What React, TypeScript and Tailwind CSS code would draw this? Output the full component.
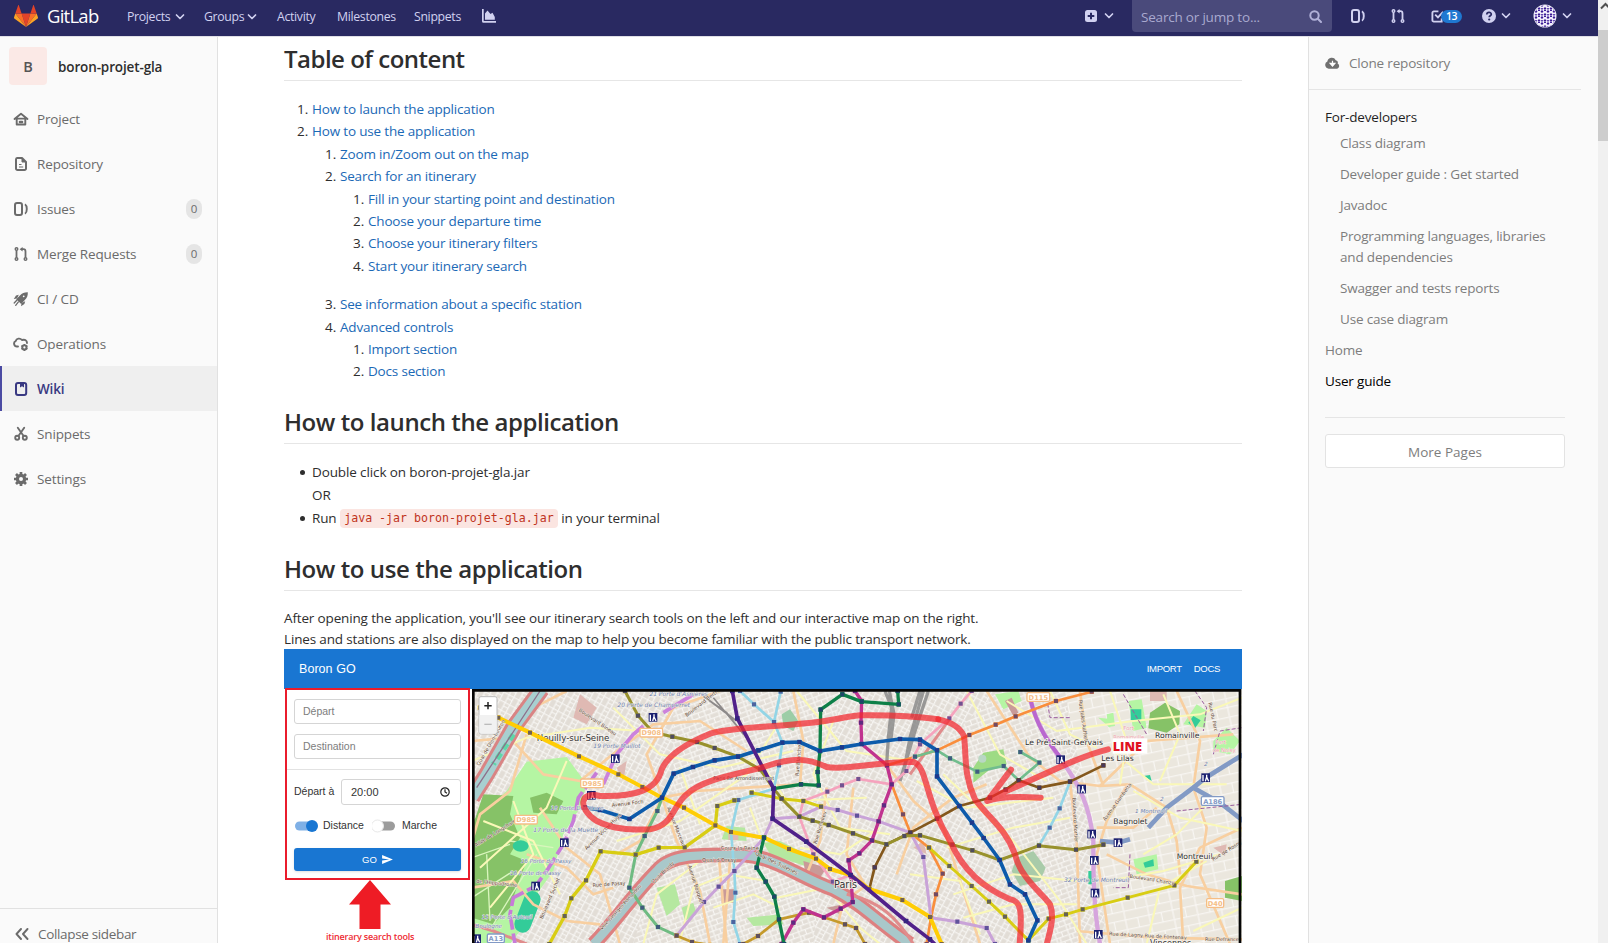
import React from "react";

const CHEVRON = "M1.5 2 5 5.5 8.5 2";

function Chevron({ className = "" }: { className?: string }) {
  return (
    <svg viewBox="0 0 10 8" className={"h-2 w-[10px] shrink-0 " + className} fill="none" stroke="currentColor" strokeWidth="1.7" strokeLinecap="round" strokeLinejoin="round">
      <path d={CHEVRON} />
    </svg>
  );
}

function IssuesIcon() {
  return (
    <svg viewBox="0 0 16 16" className="size-4 shrink-0" fill="none" stroke="currentColor" strokeWidth="2">
      <rect x="2" y="2" width="7" height="12" rx="2" />
      <path d="M12 3.200c1.500 1 1.800 2 1.800 4.800s-.3 3.800-1.800 4.800" strokeWidth="1.900" />
    </svg>
  );
}

function MergeIcon() {
  return (
    <svg viewBox="0 0 16 16" className="size-4 shrink-0" fill="none" stroke="currentColor" strokeWidth="1.800">
      <circle cx="3.500" cy="3" r="1.300" strokeWidth="1.400" />
      <circle cx="3.500" cy="13" r="1.300" strokeWidth="1.400" />
      <circle cx="12.500" cy="13" r="1.300" strokeWidth="1.400" />
      <path d="M3.500 4.500v7M12.500 11.500V5.500c0-1.500-.7-2.300-2-2.300H8.500" />
      <path d="M9.600.9v4.600L6.600 3.200z" fill="currentColor" stroke="none" />
    </svg>
  );
}

function NavIcon({ name }: { name: string }) {
  const c = "size-4 shrink-0";
  switch (name) {
    case "Project":
      return (
        <svg viewBox="0 0 16 16" className={c} fill="none" stroke="currentColor" strokeWidth="1.900" strokeLinejoin="round" strokeLinecap="round">
          <path d="M1.500 8 8 2.700 14.500 8M3.700 8v5.500h8.600V8M2.500 7.600h11" />
          <path d="M7 11h2" strokeWidth="2.600" />
        </svg>
      );
    case "Repository":
      return (
        <svg viewBox="0 0 16 16" className={c} fill="none" stroke="currentColor" strokeWidth="2" strokeLinejoin="round">
          <path d="M4 2h5l4 4v6.500a1.500 1.500 0 0 1-1.500 1.500h-7A1.500 1.500 0 0 1 3 12.500v-9C3 2.500 3.500 2 4 2z" />
          <path d="M9 2v4h4z" fill="currentColor" strokeWidth="1" />
          <path d="M6 8.500h2.500M6 11h4.200" strokeWidth="1.200" />
        </svg>
      );
    case "Issues":
      return <IssuesIcon />;
    case "Merge Requests":
      return <MergeIcon />;
    case "CI / CD":
      return (
        <svg viewBox="0 0 16 16" className={c} fill="currentColor">
          <path fillRule="evenodd" d="M14.800 1.200c.2 3.300-.8 5.700-3.200 8.100L8.200 13 3.200 8.200 6.900 4.500C9.100 2.200 11.500 1.100 14.800 1.200zM10.700 4.400a.9.9 0 1 0 .9.900.9.900 0 0 0-.9-.9z" />
          <path d="M5.800 3.800 3 4.600.8 8l3.200-.6zM12.200 10.200 11.400 13 8 15.200l.6-3.200z" />
          <path d="M3.800 9.300 1.200 12M5.400 10.900 2.700 14.300" stroke="currentColor" strokeWidth="1.300" strokeLinecap="round" />
        </svg>
      );
    case "Operations":
      return (
        <svg viewBox="0 0 16 16" className={c} fill="none" stroke="currentColor" strokeWidth="1.900" strokeLinecap="round">
          <path d="M5 10.500H4A2.900 2.900 0 0 1 2.700 5C3.500 2.400 7 1.700 9 4c3-1 5 .5 5 3" />
          <circle cx="11.400" cy="11.400" r="2.100" strokeWidth="2" />
          <path d="M11.400 7.900v1.200M11.400 13.700v1.200M8.400 9.700l1 .6M13.400 12.500l1 .6M8.400 13.100l1-.6M13.400 10.300l1-.6" strokeWidth="1.500" strokeLinecap="butt" />
        </svg>
      );
    case "Wiki":
      return (
        <svg viewBox="0 0 16 16" className={c} fill="none" stroke="currentColor" strokeWidth="2">
          <rect x="3" y="2" width="10.200" height="12" rx="2" />
          <path d="M7 2.500h4v4L9 5.200 7 6.500z" fill="currentColor" stroke="none" />
        </svg>
      );
    case "Snippets":
      return (
        <svg viewBox="0 0 16 16" className={c} fill="none" stroke="currentColor" strokeWidth="1.900">
          <circle cx="4.200" cy="11.800" r="2" />
          <circle cx="11.800" cy="11.800" r="2" />
          <path d="M4.800 1.800 10.600 10M11.200 1.800 5.400 10" strokeLinecap="round" />
        </svg>
      );
    default:
      return (
        <svg viewBox="0 0 16 16" className={c} fill="none" stroke="currentColor">
          <circle cx="8" cy="8" r="3.600" strokeWidth="3.200" />
          <path d="M8 1v3M8 12v3M1 8h3M12 8h3M3 3l2.200 2.200M10.800 10.800 13 13M13 3l-2.200 2.200M5.200 10.800 3 13" strokeWidth="2.700" />
        </svg>
      );
  }
}

function Header() {
  return (
    <header className="flex h-[37px] shrink-0 border-b border-[#dfdfe6] bg-[#292961] pb-1 text-[12.300px] text-[#d1d1f0]">
      <div className="flex w-[127px] shrink-0 items-center pl-[14px]">
        <svg viewBox="0 0 24 22" className="h-[22px] w-6">
          <path fill="#e24329" d="M12 22 7.600 8.400h8.800z" />
          <path fill="#fc6d26" d="M12 22 7.600 8.400H1.300zM12 22l4.400-13.600h6.300z" />
          <path fill="#fca326" d="M1.300 8.400 0 12.500c-.1.400 0 .8.300 1L12 22zM22.700 8.400l1.300 4.100c.1.400 0 .8-.3 1L12 22z" />
          <path fill="#e24329" d="M1.300 8.400h6.300L4.900.4c-.1-.4-.7-.4-.8 0zM22.700 8.400h-6.300L19.100.4c.1-.4.700-.4.800 0z" />
        </svg>
        <span className="ml-[9px] text-[18.5px] leading-none tracking-[-0.75px] text-white">GitLab</span>
      </div>
      <nav className="flex items-center pt-0.5 tracking-[-0.33px]">
        <span className="w-12">Projects</span><Chevron className="mr-[19px]" />
        <span className="w-[43px]">Groups</span><Chevron className="mr-5" />
        <span className="w-[60px]">Activity</span>
        <span className="w-[77px]">Milestones</span>
        <span className="w-[68px]">Snippets</span>
        <svg viewBox="0 0 14 14" className="-mt-0.5 size-[14px]" fill="currentColor">
          <path d="M0 0h1.700v12H14v1.700H1.500A1.500 1.500 0 0 1 0 12.200z" />
          <path d="M3 10.800V4.500L5.500 1.500l3 3.500 2-1.300L12.800 8v2.800z" />
        </svg>
      </nav>
      <div className="ml-auto flex items-center">
        <svg viewBox="0 0 12 12" className="size-3"><rect width="12" height="12" rx="2.500" fill="currentColor" /><path d="M6 2.700v6.600M2.700 6h6.600" stroke="#292961" strokeWidth="2" /></svg>
        <Chevron className="mr-[18px] ml-[7px]" />
        <div className="flex h-8 w-[200px] items-center justify-between self-start rounded-b bg-[#4a4a7b] pr-[10px] pl-[9px] text-[13.500px] text-[#a9a9cf]">
          <span className="pt-0.5 tracking-[-0.2px]">Search or jump to...</span>
          <svg viewBox="0 0 13 13" className="size-[13px]" fill="none" stroke="#b0b0d8" strokeWidth="2"><circle cx="5.500" cy="5.500" r="4.200" /><path d="m8.800 8.800 3.200 3.200" strokeLinecap="round" /></svg>
        </div>
        <div className="ml-[18px]"><IssuesIcon /></div>
        <div className="ml-6"><MergeIcon /></div>
        <svg viewBox="0 0 14 14" className="ml-[25px] size-[13px]" fill="none" stroke="currentColor" strokeWidth="2"><path d="M8 1.500H3A1.500 1.500 0 0 0 1.500 3v8A1.500 1.500 0 0 0 3 12.500h8.500V9" /><path d="m4.500 5 3 3L13 2" /></svg>
        <span className="-ml-[3px] flex h-[13px] w-[21px] items-center justify-center rounded-full bg-[#1f78d1] text-[10.500px] leading-none font-semibold tracking-[-0.4px] text-white">13</span>
        <svg viewBox="0 0 14 14" className="ml-5 size-[14px]"><circle cx="7" cy="7" r="7" fill="currentColor" /><path d="M4.800 5.600C4.800 2.700 9.300 2.800 9.300 5.300c0 1.500-2.100 1.500-2.100 2.900" fill="none" stroke="#292961" strokeWidth="1.700" /><circle cx="7.200" cy="10.500" r="1.100" fill="#292961" /></svg>
        <Chevron className="mr-[22px] ml-[5px]" />
        <svg viewBox="0 0 24 24" className="size-6">
          <defs>
            <pattern id="weave" width="6" height="6" patternUnits="userSpaceOnUse">
              <path d="M3 0 4.500 1.500 3 3 1.500 1.500zM0 3 1.500 4.500 0 6zM6 3v3L4.500 4.500z" fill="#3b1b94" />
              <path d="M0 0h1v1H0zM5 0h1v1H5zM2.200 4h1.600v1.600H2.200z" fill="#40219b" />
            </pattern>
          </defs>
          <circle cx="12" cy="12" r="11.500" fill="#f2effb" />
          <circle cx="12" cy="12" r="10.800" fill="url(#weave)" />
        </svg>
        <Chevron className="mr-[26px] ml-[5px]" />
      </div>
    </header>
  );
}

const NAV = ["Project", "Repository", "Issues", "Merge Requests", "CI / CD", "Operations", "Wiki", "Snippets", "Settings"];

function Sidebar() {
  return (
    <aside className="flex w-[218px] shrink-0 flex-col border-r border-[#e1e1e1] bg-[#fafafa] text-[13.500px] text-[#6b6b6b]">
      <div className="flex h-[59px] items-center pb-px pl-[9px]">
        <span className="flex size-[38px] items-center justify-center rounded bg-[#fbe9e6] pt-0.5 text-[14.500px] font-semibold text-[#555]">B</span>
        <span className="ml-[11px] pt-0.5 text-[13.500px] font-semibold tracking-[-0.13px] text-[#2e2e2e]">boron-projet-gla</span>
      </div>
      <nav>
        {NAV.map((n) => (
          <a key={n} className={n === "Wiki" ? "flex h-[45px] items-center border-l-2 border-[#4b4ba3] bg-[#efefef] pl-[11px] font-semibold text-[#393982]" : "flex h-[45px] items-center pl-[13px]"}>
            <NavIcon name={n} />
            <span className="ml-2 pt-0.5 tracking-[-0.14px]">{n}</span>
            {(n === "Issues" || n === "Merge Requests") && (
              <span className="mr-[15px] ml-auto flex h-5 w-4 items-center justify-center rounded-full bg-[#e5e5e5] pt-px text-[11.500px]">0</span>
            )}
          </a>
        ))}
      </nav>
      <div className="mt-auto flex h-[35px] items-center border-t border-[#e1e1e1] pt-[15px] pl-[15px]">
        <svg viewBox="0 0 14 12" className="h-3 w-[14px]" fill="none" stroke="currentColor" strokeWidth="1.900" strokeLinecap="round" strokeLinejoin="round"><path d="M6 1 1.500 6 6 11M12.500 1 8 6l4.500 5" /></svg>
        <span className="ml-[9px] leading-5 tracking-[-0.34px] whitespace-nowrap">Collapse sidebar</span>
      </div>
    </aside>
  );
}

function Item({ n, children, level = 0 }: { n: string; children: React.ReactNode; level?: number }) {
  return (
    <li className={level === 0 ? "flex" : level === 1 ? "flex pl-7" : "flex pl-14"}>
      <span className="w-7 shrink-0 pr-1 text-right">{n}.</span>
      <a className="text-[#1b69b6]">{children}</a>
    </li>
  );
}

const H2 = "border-b border-[#e6e6e6] text-[24px] font-semibold text-[#2e2e2e]";

/* Map coordinates: three units to a CSS pixel. */
const LINES: [string, number, string][] = [
  ["#f98e3c", 8, "2435,152 2328,180 2207,226 2147,251 2068,282 1971,328 1821,373 1835,430 1869,520 1891,575 1947,620 1988,698 1968,760 1953,830 1940,909"],
  ["#f5a3bd", 8, "2075,150 2042,188 2008,232 1920,310 1879,390 1835,430 1735,414 1686,433 1642,452 1570,480 1558,527 1600,640 1658,722 1712,702"],
  ["#93d5e6", 8, "1380,150 1422,190 1482,243"],
  ["#93d5e6", 8, "1502,152 1482,243 1507,305 1497,373 1481,443 1375,477 1353,573 1363,690 1366,755 1360,843 1380,909"],
  ["#93d5e6", 8, "2370,422 2339,502 2309,560 2277,614"],
  ["#71bd8d", 8, "1905,347 1971,328 2010,352 2092,392 2171,375 2216,418 2278,365 2221,333"],
  ["#6fbb82", 9, "1146,470 1132,510 1094,585 1067,641 1048,740 1087,800 1134,858 1190,884"],
  ["#c9a3d8", 9, "1190,884 1272,783 1316,737 1363,690 1452,590 1478,533 1558,527 1623,497 1673,507 1731,524 1796,541 1891,575 1930,648 1953,830 2032,842 2120,861 2145,909"],
  ["#c59a2b", 8, "1190,884 1236,903 1290,912 1390,909 1434,885 1497,835 1587,815 1632,829 1695,850 1728,861 1755,909"],
  ["#84581c", 8, "1768,744 1784,679 1819,610 1891,575 1971,533 2038,495 2130,470 2177,446 2216,418 2278,440 2370,422 2470,373"],
  ["#d8cd14", 10, "808,909 854,825 874,772 918,718 962,631 1067,641 1136,620 1214,619 1306,553 1312,495 1363,478"],
  ["#d8cd14", 9, "1415,455 1505,473 1570,480 1623,497"],
  ["#d8cd14", 9, "1947,620 2008,675 2075,735 2127,782 2175,827 2245,898 2306,833 2358,820 2408,805 2543,770 2683,733 2749,662"],
  ["#98912c", 9, "1035,150 1074,224 1118,273 1177,287 1251,303 1304,321 1374,347 1440,385 1481,443 1505,473 1558,527 1598,539 1646,552 1719,577 1776,598 1819,610 1873,585 1920,583 2017,611 2077,628 2159,657 2277,614 2388,626 2470,611"],
  ["#ffcd05", 12, "600,200 655,230 750,275 897,346 1015,400 1087,438 1146,470 1212,500 1306,553 1353,573 1452,590 1527,624 1608,653 1650,684 1712,702 1768,744 1867,777 1950,828 1985,909"],
  ["#c0338f", 10, "1725,150 1745,180 1743,245 1745,309 1821,373 1835,430 1812,493 1796,541 1776,598 1738,637 1706,658 1712,702 1718,783 1682,803 1632,829 1570,805 1540,845 1505,909"],
  ["#0e8048", 10, "1853,150 1856,190 1745,182 1687,160 1622,206 1620,330 1613,393 1616,433 1563,430 1481,443"],
  ["#0e8048", 10, "1452,590 1430,680 1457,722 1483,767 1497,835 1512,909"],
  ["#0d5bab", 11, "915,500 960,507 1048,534 1146,470 1181,398 1239,378 1304,358 1374,347 1435,328 1507,305 1558,303 1620,330 1686,319 1745,309 1860,294 1920,296 1971,328 1971,406 2038,495 2076,545 2111,591 2159,657 2190,730 2235,760 2272,838 2245,898"],
  ["#51218a", 11, "1357,150 1372,232 1481,443 1478,533 1579,602 1712,702 1878,840 1950,895 1975,920"],
];

const ORANGE = [
  "576,300 690,290 760,200 860,150", "690,290 790,400 900,420 1010,330 1120,250 1260,240 1400,330", "740,280 690,450 600,520 576,600",
  "1146,470 1250,450 1400,440 1560,430", "1146,470 1100,340 1180,200 1320,150", "1146,470 1190,600 1260,750 1290,909", "1146,470 1080,600 1010,640",
  "1316,640 1340,909", "1350,660 1330,909", "1540,150 1570,300 1560,430", "1020,909 960,700 860,620 780,500", "740,640 860,680 940,760 1000,740",
  "1640,440 1620,600 1580,700", "1821,373 1900,480 1990,560 2100,909", "2120,150 2250,350 2340,420 2460,435 2550,430 2660,500 2690,600 2700,700",
  "2460,435 2600,300 2860,280", "2370,422 2390,600 2400,909", "2400,150 2420,300 2470,435", "2480,640 2600,700 2720,735 2886,760", "2630,500 2560,560 2450,560",
  "2540,435 2480,540 2450,640 2490,909", "2690,150 2760,300 2740,440 2780,560 2760,700 2850,909", "2886,560 2760,620 2700,740 2710,909", "2390,870 2620,890 2886,895",
  "1720,440 1700,640 1760,740", "1850,700 1900,560 2020,470 2120,430", "1660,909 1690,780 1750,740", "576,740 700,720 760,790 860,840 960,850",
];
const YELLOW = [
  "576,360 740,290 930,260 1090,270", "1000,200 1140,340 1320,380 1540,330", "1010,600 1200,540 1400,400 1500,240", "1200,900 1240,740 1340,700 1460,720",
  "1090,909 1130,760 1260,660", "1550,150 1700,330 1900,360", "1420,330 1520,480 1760,470", "1660,240 1600,400 1680,560 1830,580", "1490,770 1640,740 1740,860 1800,909",
  "1910,420 2060,500 2320,470", "1990,400 2200,600 2340,780 2420,909", "2060,150 2160,340 2300,420", "2180,180 2330,270 2560,240 2760,220 2886,170", "2310,150 2370,280 2450,320",
  "2500,330 2620,430 2840,430", "2560,450 2700,530 2886,570", "2590,640 2690,580 2800,470", "2480,720 2650,690 2820,640", "2600,909 2640,740 2780,660", "2490,150 2540,300 2520,430",
  "2000,620 2200,560 2370,530", "2020,760 2200,700 2390,720", "2050,830 2200,790 2390,790", "1890,700 2040,720 2100,880", "1300,800 1420,760 1500,800", "1410,500 1440,580", "1200,380 1260,550",
  "610,540 760,600 840,760", "600,680 800,500 860,360", "630,800 760,640 700,480", "1560,620 1680,640 1800,560", "2650,160 2700,280 2640,420", "2740,870 2886,800",
];

function Label({ x, y, s = 26, c = "#333", r = 0, i = false, children }: { x: number; y: number; s?: number; c?: string; r?: number; i?: boolean; children: React.ReactNode }) {
  return (
    <text x={x} y={y} fontSize={s} fill={c} transform={`rotate(${r} ${x} ${y})`} fontStyle={i ? "italic" : "normal"} stroke="#f6f2ec" strokeWidth={s > 20 ? 5 : 2} strokeLinejoin="round" paintOrder="stroke" fontFamily="DejaVu Sans, sans-serif">
      {children}
    </text>
  );
}

function RoadShield({ x, y, c, children }: { x: number; y: number; c: string; children: string }) {
  return (
    <g>
      <rect x={x} y={y} width={children.length * 17} height="26" rx="4" fill="#fff" stroke={c} strokeWidth="4" />
      <text x={x + children.length * 8.5} y={y + 21} fontSize="20" fontWeight="bold" fill={c} textAnchor="middle" fontFamily="DejaVu Sans, sans-serif">{children}</text>
    </g>
  );
}

const EXITS: [number, number][] = [[934, 463], [853, 605], [767, 735], [590, 893], [1119, 229], [1006, 353], [2342, 356], [2405, 444], [2435, 579], [2514, 605], [2443, 658], [2445, 756], [2455, 880], [2777, 410]];

function TransitMap() {
  return (
    <svg viewBox="576 144 2310 765" className="h-[255px] w-[770px] shrink-0">
      <defs>
        <pattern id="s1" width="34" height="26" patternUnits="userSpaceOnUse" patternTransform="rotate(28)">
          <rect width="34" height="26" fill="#e2ddd6" /><path d="M0 2h34M3 0v26M19 2v24M3 14h16" stroke="#fbfaf8" strokeWidth="3" />
        </pattern>
        <pattern id="s2" width="40" height="30" patternUnits="userSpaceOnUse" patternTransform="rotate(-20)">
          <rect width="40" height="30" fill="#e3ded7" /><path d="M0 2h40M3 0v30M24 2v15M3 17h37M14 17v13" stroke="#fbfaf8" strokeWidth="3" />
        </pattern>
        <pattern id="s3" width="72" height="56" patternUnits="userSpaceOnUse" patternTransform="rotate(-12)">
          <rect width="72" height="56" fill="#ebe7de" /><path d="M0 2h72M3 0v56M40 2v30M3 32h69" stroke="#fbfaf8" strokeWidth="3" />
        </pattern>
      </defs>
      <rect x="576" y="144" width="2310" height="765" fill="url(#s1)" />
      <path d="M1180 144H1680L1600 909H1060L1180 520z" fill="url(#s2)" />
      <path d="M1560 440 1980 320 2280 600 2100 909H1640z" fill="url(#s1)" />
      <path d="M2350 144H2886V909H2480L2430 520z" fill="url(#s3)" />
      <path d="M1971 328 2160 144H2360L2400 909H2260L2160 640z" fill="url(#s2)" />

      <path fill="#b5f5a3" d="M740 362 860 348 920 430 900 500 850 580 820 690 770 760 720 870 690 909H576V540L680 450z" />
      <path fill="#86c267" d="M610 460 700 465 690 520 720 590 690 640 740 660 710 740 690 800 640 850 576 830V560z" />
      <path fill="#86c267" d="M750 470 800 455 850 480 830 520 760 515z" />
      <path d="M576 650 690 610M576 770 700 690M620 640 630 840M690 600 820 620M640 850 770 640" stroke="#d9f5bd" strokeWidth="4" fill="none" />
      <ellipse cx="722" cy="615" rx="24" ry="17" fill="#33cc99" />
      <path d="M728 850 757 775" stroke="#33cc99" strokeWidth="50" strokeLinecap="round" />
      <path fill="#b5e8a0" d="M1130 740 1185 730 1200 790 1160 825zM1340 555 1395 560 1400 600 1325 595zM1450 605 1500 600 1600 650 1590 680 1470 640zM1205 800 1240 785 1250 820 1215 840zM1400 830 1500 820 1510 850 1420 855z" />
      <path fill="#9ccda6" d="M1505 220 1530 205 1555 240 1540 270 1510 255z" />
      <path fill="#a9cba9" d="M2210 650 2260 630 2297 680 2280 720 2220 735 2195 690z" />
      <path fill="#9edb84" d="M2080 380 2110 335 2170 325 2180 370 2130 385 2080 425z" />
      <circle cx="2107" cy="353" r="12" fill="#b9d7c4" />
      <path fill="#86c267" d="M2610 215 2655 185 2700 210 2698 250 2660 275 2605 262zM2835 720 2886 705V780L2835 770z" />
      <path fill="#b5f5a3" d="M2145 160 2215 150 2225 180 2170 205zM2710 250 2750 190 2780 210 2775 260zM2480 220 2500 215 2505 255 2485 258zM2560 655 2630 640 2635 685 2570 700zM2800 300 2840 260 2880 300 2850 340 2800 330zM2545 180 2585 175 2600 260 2560 270zM2455 230 2500 235 2490 260z" />
      <path fill="#33cc99" d="M2552 205h32v32h-32zM2725 245 2740 225 2762 238 2745 262zM2590 665 2620 655 2622 675 2595 680zM2425 690h18v40h-18zM2590 405 2610 402 2615 420z" />
      <path fill="#c99a98" d="M2175 180 2195 170 2215 215 2200 225zM1325 745h38v40h-38zM1570 660 1640 680 1620 710 1575 690zM1640 800 1690 790 1680 820z" />
      <path fill="#dfb9b3" d="M900 160 950 200 920 250 880 230zM1010 380 1040 360 1030 420zM1900 620 1930 600 1940 640zM2800 620 2840 610 2835 645zM2610 150h50v30h-50zM1345 575h30v22h-30z" />

      {ORANGE.map((p) => <polyline key={p} points={p} fill="none" stroke="#f8cfa0" strokeWidth="8" strokeLinejoin="round" />)}
      {YELLOW.map((p) => <polyline key={p} points={p} fill="none" stroke="#faf8b8" strokeWidth="6" strokeLinejoin="round" />)}

      <path d="M785 144 700 260 620 400 576 470" fill="none" stroke="#d98484" strokeWidth="50" />
      <path d="M785 144 700 260 620 400 576 470" fill="none" stroke="#a8cfd0" strokeWidth="32" />
      <path d="M700 280 640 370" stroke="#5fd6a8" strokeWidth="16" strokeDasharray="20 14" />
      <path d="M780 150 590 440" fill="none" stroke="#8d6f8a" strokeWidth="4" />
      <path d="M940 909C1000 850 1060 760 1130 690 1170 640 1250 640 1390 642 1490 650 1560 710 1660 745 1750 790 1800 850 1890 909" fill="none" stroke="#dd8080" strokeWidth="44" />
      <path d="M940 909C1000 850 1060 760 1130 690 1170 640 1250 640 1390 642 1490 650 1560 710 1660 745 1750 790 1800 850 1890 909" fill="none" stroke="#a9c8ca" strokeWidth="25" />
      <path d="M576 850 640 870 740 909M2010 232 1890 400M1700 760C1800 780 1850 830 1900 909" fill="none" stroke="#e08c8c" strokeWidth="9" />
      <path d="M1300 170 1350 230 1400 290M1290 180 1340 215 1390 280M1270 165 1370 240" fill="none" stroke="#8d8a8a" strokeWidth="5" />
      <path d="M1815 150 1835 200 1825 290 1820 370M1828 150 1842 220 1832 300M1930 150 1890 290 1870 400M1945 150 1905 270 1860 420M1920 150 1895 230" fill="none" stroke="#858585" strokeWidth="10" opacity=".8" />
      <path d="M2250 170C2270 260 2320 320 2342 356 2400 430 2430 500 2440 600 2440 700 2440 800 2460 909" fill="none" stroke="#d6a5dd" strokeWidth="13" />
      <path d="M2250 170C2270 260 2310 310 2342 350" fill="none" stroke="#b967cf" strokeWidth="12" />
      <path d="M950 395 895 470 880 540 853 605 800 690 767 735 700 770 690 820 705 909" fill="none" stroke="#c77cd8" strokeWidth="11" strokeDasharray="60 12" />
      <path d="M970 430 1010 340 1060 280 1090 255M1150 215 1240 160" fill="none" stroke="#cc82dc" strokeWidth="11" />
      <path d="M2890 340 2777 410 2740 440 2660 500 2605 560M2740 440 2820 485 2890 540M2550 595 2514 605 2460 600" fill="none" stroke="#829ac5" strokeWidth="14" />
      <path d="M2745 150 2780 200 2770 270M2800 340 2820 270 2886 260M2300 170 2310 230 2370 230M2550 640 2545 740 2500 740M2690 510 2886 490M2530 160 2600 280" fill="none" stroke="#9a5c9e" strokeWidth="3" strokeDasharray="12 6" />

      <Label x={770} y={300}>Neuilly-sur-Seine</Label>

      {LINES.map(([c, w, p]) => (
        <g key={p}>
          <polyline points={p} fill="none" stroke={c} strokeWidth={w} strokeLinejoin="round" />
          {p.split(" ").map((pt) => {
            const [x, y] = pt.split(",").map(Number);
            return (
              <g key={pt}>
                <rect x={x - 7} y={y - 7} width="14" height="14" rx="2" fill={c} />
                <rect x={x - 6} y={y - 6} width="12" height="12" fill="#28287a" opacity=".65" />
              </g>
            );
          })}
        </g>
      ))}
      {EXITS.map(([x, y]) => (
        <g key={x + "-" + y}>
          <rect x={x - 13} y={y - 13} width="26" height="26" fill="#1c2170" />
          <path d={`M${x - 8} ${y + 11}V${y - 8}M${x + 3} ${y - 9}v7l6 13M${x - 1} ${y + 11}l4-13`} stroke="#fff" strokeWidth="4" fill="none" />
        </g>
      ))}

      <Label x={1662} y={742} s={29}>Paris</Label>
      <Label x={2235} y={311} s={23}>Le Pré-Saint-Gervais</Label>
      <Label x={2625} y={291} s={23}>Romainville</Label>
      <Label x={2464} y={361} s={23}>Les Lilas</Label>
      <Label x={2500} y={550} s={23}>Bagnolet</Label>
      <Label x={2690} y={653} s={23}>Montreuil</Label>
      <Label x={2610} y={915} s={24}>Vincennes</Label>
      <Label x={1300} y={418} s={15}>Paris 8e Arrondissement</Label>
      <g>
        <Label x={1108} y={164} s={18} c="#6c7fae" i>21 Porte d'Asnières</Label>
        <Label x={1012} y={197} s={18} c="#6c7fae" i>20 Porte de Champerret</Label>
        <Label x={940} y={321} s={18} c="#6c7fae" i>19 Porte Maillot</Label>
        <Label x={812} y={506} s={17} c="#6c7fae" i>18 Porte Dauphine</Label>
        <Label x={760} y={574} s={18} c="#6c7fae" i>17 Porte de la Muette</Label>
        <Label x={722} y={666} s={17} c="#6c7fae" i>16 Porte de Passy</Label>
        <Label x={690} y={703} s={17} c="#6c7fae" i>16 Porte de Passy</Label>
        <Label x={605} y={835} s={17} c="#6c7fae" i>15 Porte d'Auteuil</Label>
        <Label x={586} y={861} s={17} c="#6c7fae" i>Boulogne</Label>
        <Label x={2565} y={515} s={17} c="#6c7fae" i>1 Montreuil</Label>
        <Label x={2352} y={724} s={18} c="#6c7fae" i>32 Porte de Montreuil</Label>
        <Label x={2772} y={375} s={17} c="#6c7fae" i>2</Label>
        <Label x={2640} y={480} s={17} c="#6c7fae" i>2</Label>
      </g>
      <g>
        <Label x={895} y={210} s={15} c="#5c4430" r={34}>Boulevard Bineau</Label>
        <Label x={598} y={375} s={15} c="#5c4430" r={-60}>Quai de Dion-Bouton</Label>
        <Label x={588} y={618} s={15} c="#5c4430" r={-32}>Allée de Longchamp</Label>
        <Label x={588} y={725} s={15} c="#5c4430" r={6}>de l'Hippodrome</Label>
        <Label x={788} y={835} s={15} c="#5c4430" r={-67}>Boulevard Suchet</Label>
        <Label x={920} y={628} s={15} c="#5c4430" r={-45}>Avenue Victor Hugo</Label>
        <Label x={1220} y={228} s={15} c="#5c4430" r={-38}>Boulevard Berthier</Label>
        <Label x={996} y={498} s={15} c="#5c4430" r={-7}>Avenue Foch</Label>
        <Label x={1160} y={500} s={15} c="#5c4430" r={68}>Avenue Marceau</Label>
        <Label x={1322} y={626} s={16} c="#5c4430">Cours la Reine</Label>
        <Label x={1266} y={662} s={16} c="#5c4430">Quai d'Orsay</Label>
        <Label x={1424} y={640} s={16} c="#5c4430" r={26}>Quai des Tuileries</Label>
        <Label x={1120} y={728} s={15} c="#5c4430" r={-43}>Quai Branly</Label>
        <Label x={1223} y={674} s={15} c="#5c4430" r={72}>Avenue Bosquet</Label>
        <Label x={966} y={868} s={15} c="#5c4430" r={-48}>Voie Georges Pompidou</Label>
        <Label x={1556} y={405} s={15} c="#5c4430" r={-85}>Rue Blanche</Label>
        <Label x={1610} y={610} s={15} c="#5c4430" r={-73}>Rue Richelieu</Label>
        <Label x={938} y={738} s={15} c="#5c4430" r={-4}>Rue de Passy</Label>
        <Label x={2396} y={178} s={15} c="#5c4430" r={82}>Rue Jules Auffret</Label>
        <Label x={2377} y={470} s={15} c="#5c4430" r={87}>Boulevard Mortier</Label>
        <Label x={2476} y={540} s={15} c="#5c4430" r={-54}>Avenue Gambetta</Label>
        <Label x={2548} y={710} s={15} c="#5c4430" r={9}>Boulevard Chanzy</Label>
        <Label x={2487} y={883} s={15} c="#5c4430" r={3}>Rue de Lagny  Rue de Fontenay</Label>
        <Label x={2775} y={900} s={15} c="#5c4430">Rue Defrance</Label>
        <Label x={2800} y={660} s={15} c="#5c4430" r={-32}>Rue de Rosny</Label>
        <Label x={2785} y={185} s={15} c="#5c4430" r={78}>Rue du Parc</Label>
        <Label x={2530} y={266} s={16} c="#f0a0ad">Fort</Label>
        <Label x={2500} y={293} s={16} c="#f0a0ad">Romainville</Label>
        <Label x={2806} y={308} s={16} c="#f0a0ad">Fort</Label>
        <Label x={2798} y={332} s={16} c="#f0a0ad">de Noisy</Label>
      </g>
      <RoadShield x={902} y={414} c="#f5bd85">D985</RoadShield>
      <RoadShield x={704} y={523} c="#f5bd85">D985</RoadShield>
      <RoadShield x={1080} y={262} c="#f5bd85">D908</RoadShield>
      <RoadShield x={2241} y={155} c="#f5bd85">D115</RoadShield>
      <RoadShield x={2780} y={773} c="#f5bd85">D40</RoadShield>
      <RoadShield x={2764} y={467} c="#829ac5">A186</RoadShield>
      <RoadShield x={622} y={879} c="#829ac5">A13</RoadShield>

      <g fill="none" stroke="#f2262c" strokeOpacity=".72" strokeWidth="18" strokeLinecap="round" strokeLinejoin="round">
        <path d="M1975 235C1900 225 1800 222 1740 223 1680 228 1650 243 1560 248 1450 260 1350 260 1290 278 1200 315 1160 350 1145 385 1130 450 1060 468 960 465 900 450 890 500 950 540 1000 565 1050 567 1110 565 1180 555 1180 490 1220 460 1270 410 1400 395 1460 375 1540 350 1580 350 1640 378 1700 388 1760 365 1900 362 1945 380 1930 470 2010 600 2050 690 2110 740 2190 775 2225 780 2228 810 2217 930" />
        <path d="M1975 235C2010 242 2040 260 2052 285 2060 350 2050 400 2085 475 2130 535 2175 560 2205 640 2220 710 2290 760 2310 790 2325 830 2310 870 2295 930" />
        <path d="M2484 325C2380 350 2250 425 2130 470M2193 386 2122 480C2160 465 2220 466 2282 470" />
      </g>
      <rect x="2498" y="292" width="104" height="46" fill="#fff" />
      <text x="2498" y="329" fontSize="34" fontWeight="800" fill="#e0121f" textLength="88" lengthAdjust="spacingAndGlyphs" fontFamily="Open Sans, sans-serif">LINE</text>

      <g>
        <rect x="597" y="167" width="54" height="112" rx="6" fill="#fff" stroke="#bbb" strokeWidth="3" />
        <path d="M598 222h52v50a6 6 0 0 1-6 6h-40a6 6 0 0 1-6-6z" fill="#f1f1f1" />
        <path d="M613 194h22M624 183v22" stroke="#222" strokeWidth="4.500" />
        <path d="M613 250h22" stroke="#bbb" strokeWidth="4" />
      </g>
      <path d="M580 909V148H2880V909" fill="none" stroke="#060606" strokeWidth="8" />
    </svg>
  );
}

function Toggle({ on }: { on: boolean }) {
  return (
    <svg viewBox="0 0 24 14" className="h-[14px] w-6 shrink-0">
      <rect x="1" y="2.500" width="22" height="9" rx="4.500" fill={on ? "#7fb0e6" : "#9c9c9c"} />
      <circle cx={on ? 18 : 5.500} cy="7" r="6" fill={on ? "#1976d2" : "#fff"} stroke={on ? "none" : "#e8e8e8"} />
    </svg>
  );
}

function AppPreview() {
  return (
    <div className="w-[958px] font-['Liberation_Sans',sans-serif]">
      <div className="flex h-10 items-center bg-[#1976d2] pr-[22px] pl-[15px] text-white">
        <span className="text-[12.500px] tracking-[0.05px]">Boron GO</span>
        <span className="ml-auto text-[9.500px] tracking-[-0.3px]">IMPORT</span>
        <span className="ml-3 text-[9.500px] tracking-[-0.3px]">DOCS</span>
      </div>
      <div className="flex">
        <div className="flex w-[188px] shrink-0 flex-col">
          <div className="-mt-px ml-px h-[192px] w-[185px] border-[2.500px] border-[#ea1c2c] bg-white text-[10.500px] text-[#333]">
            <div className="px-[7px] pt-[9px]">
              <div className="flex h-[25px] items-center rounded-[3px] border border-[#d5d5d5] pl-2 text-[#7d7d7d]">Départ</div>
              <div className="mt-2.5 flex h-[25px] items-center rounded-[3px] border border-[#d5d5d5] pl-2 text-[#7d7d7d]">Destination</div>
            </div>
            <div className="mt-[10px] border-t border-[#e2e2e2]" />
            <div className="px-[7px] pt-[9px]">
              <div className="flex items-center">
                <span className="w-[47px] whitespace-nowrap">Départ à</span>
                <div className="flex h-[26px] flex-1 items-center justify-between rounded-[3px] border border-[#d5d5d5] pr-[10px] pl-[9px]">
                  <span className="text-[11px]">20:00</span>
                  <svg viewBox="0 0 10 10" className="size-[10px]" fill="none" stroke="#222" strokeWidth="1.200"><circle cx="5" cy="5" r="4.200" /><path d="M5 2.200V5l2 1.200" /></svg>
                </div>
              </div>
              <div className="mt-[14px] flex h-[14px] items-center">
                <Toggle on /><span className="ml-[5px] w-[49px]">Distance</span>
                <Toggle on={false} /><span className="ml-[6px]">Marche</span>
              </div>
              <div className="mt-[15px] flex h-[23px] items-center justify-center gap-[5px] rounded-[3px] bg-[#1976d2] pt-px text-[9.500px] text-white shadow-sm">
                GO
                <svg viewBox="0 0 12 10" className="h-[9px] w-[11px]" fill="currentColor"><path d="M0 0 12 5 0 10V6l8-1-8-1z" /></svg>
              </div>
            </div>
          </div>
          <svg viewBox="0 0 42 49" className="ml-[65px] h-[49px] w-[42px]" fill="#ee1c25"><path d="M21 0 42 24.500H31.500V49h-21V24.500H0z" /></svg>
          <span className="ml-[42px] h-[15px] font-['Open_Sans',sans-serif] text-[9px] leading-[15px] font-semibold tracking-[-0.18px] whitespace-nowrap text-[#ee2b33]">itinerary search tools</span>
        </div>
        <TransitMap />
      </div>
    </div>
  );
}

function Article() {
  return (
    <main className="min-w-0 flex-1 overflow-hidden pl-[66px] text-[13.500px] text-[#2e2e2e]">
      <article className="w-[958px]">
        <h2 className={H2 + " h-11 leading-[44px] tracking-[-0.5px]"}>Table of content</h2>
        <ol className="mt-[17px] leading-[22.400px] tracking-[-0.18px]">
          <Item n="1">How to launch the application</Item>
          <Item n="2">How to use the application</Item>
          <Item n="1" level={1}>Zoom in/Zoom out on the map</Item>
          <Item n="2" level={1}>Search for an itinerary</Item>
          <Item n="1" level={2}>Fill in your starting point and destination</Item>
          <Item n="2" level={2}>Choose your departure time</Item>
          <Item n="3" level={2}>Choose your itinerary filters</Item>
          <Item n="4" level={2}>Start your itinerary search</Item>
          <li className="h-4" />
          <Item n="3" level={1}>See information about a specific station</Item>
          <Item n="4" level={1}>Advanced controls</Item>
          <Item n="1" level={2}>Import section</Item>
          <Item n="2" level={2}>Docs section</Item>
        </ol>
        <h2 className={H2 + " mt-[17px] h-[44px] leading-[44px] tracking-[-0.43px]"}>How to launch the application</h2>
        <ul className="mt-[17px] leading-[23px] tracking-[-0.12px]">
          <li className="flex items-center"><span className="mr-[7px] ml-4 size-[5px] rounded-full bg-[#2e2e2e]" />Double click on boron-projet-gla.jar</li>
          <li className="pl-7">OR</li>
          <li className="flex items-center whitespace-pre"><span className="mr-[7px] ml-4 size-[5px] rounded-full bg-[#2e2e2e]" />Run <code className="flex h-[19px] w-[218px] items-center justify-center rounded bg-[#fbe5e1] pt-px font-['DejaVu_Sans_Mono',monospace] text-[11.600px] tracking-normal text-[#c0341d]">java -jar boron-projet-gla.jar</code> in your terminal</li>
        </ul>
        <h2 className={H2 + " mt-[17px] h-[44px] leading-[44px] tracking-[-0.43px]"}>How to use the application</h2>
        <p className="mt-[17px] mb-[-1px] leading-[21px] tracking-[-0.15px]">
          After opening the application, you'll see our itinerary search tools on the left and our interactive map on the right.
          <br />
          Lines and stations are also displayed on the map to help you become familiar with the public transport network.
        </p>
        <AppPreview />
      </article>
    </main>
  );
}

function PagesPanel() {
  return (
    <aside className="w-[290px] shrink-0 border-l border-[#e1e1e1] bg-[#fafafa] text-[13.500px] tracking-[-0.18px] text-[#7d7d7d]">
      <div className="mr-[17px] flex h-[53px] items-center border-b border-[#e5e5e5] pl-4">
        <svg viewBox="0 0 16 12" className="h-3 w-[15px]"><path fill="#707070" d="M4 12a4 4 0 0 1-1.500-7.600A4.800 4.800 0 0 1 11.500 3a2.800 2.800 0 0 1 2 3.600A2.900 2.900 0 0 1 13 12z" /><path d="M8 3.500v4M5.500 6.500 8 9.300l2.500-2.800z" fill="#fff" stroke="#fff" strokeWidth="1.300" /></svg>
        <span className="ml-[9px]">Clone repository</span>
      </div>
      <div className="mr-[33px] ml-4 pt-[17px] leading-[21px]">
        <p className="text-[#1f1f1f]">For-developers</p>
        <ul className="mt-[5px] flex flex-col gap-[10px] pl-[15px]">
          <li>Class diagram</li>
          <li>Developer guide : Get started</li>
          <li>Javadoc</li>
          <li>Programming languages, libraries<br />and dependencies</li>
          <li>Swagger and tests reports</li>
          <li>Use case diagram</li>
        </ul>
        <p className="mt-[10px]">Home</p>
        <p className="mt-[10px] text-black">User guide</p>
        <div className="mt-[25px] mb-4 border-t border-[#e5e5e5]" />
        <button className="flex h-[34px] w-full items-center justify-center rounded-[3px] border border-[#e3e3e3] bg-white pt-[3px] tracking-[0px]">More Pages</button>
      </div>
    </aside>
  );
}

export default function App() {
  return (
    <div className="flex h-[943px] w-[1608px] overflow-hidden bg-white font-['Open_Sans','Noto_Sans',sans-serif]">
      <div className="flex w-[1598px] shrink-0 flex-col">
        <Header />
        <div className="flex min-h-0 flex-1">
          <Sidebar />
          <Article />
          <PagesPanel />
        </div>
      </div>
      <div className="w-[10px] bg-[#f0f0f0]">
        <div className="flex h-[30px] justify-center"><svg viewBox="0 0 10 8" className="mt-0.5 h-2 w-[10px]" fill="none" stroke="#505050" strokeWidth="2"><path d="M3 6.500 7.500 2 12 6.500" /></svg></div>
        <div className="h-[111px] bg-[#cdcdcd]" />
      </div>
    </div>
  );
}
